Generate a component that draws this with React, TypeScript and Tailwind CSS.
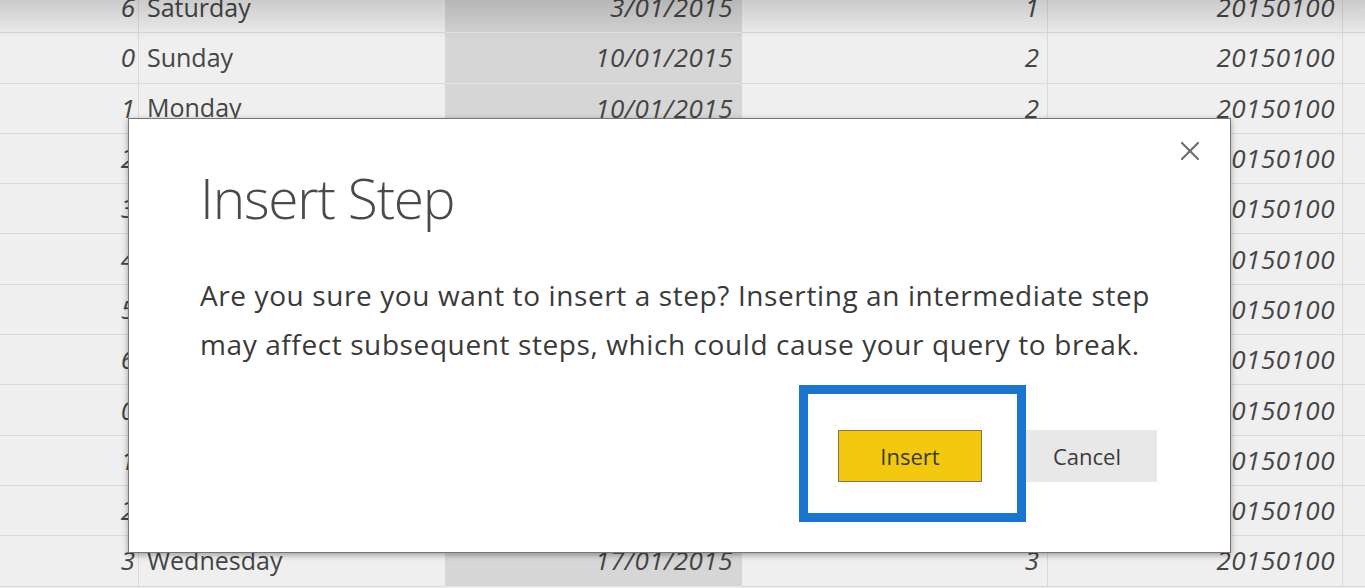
import { X } from "lucide-react";

const rows = [
  { n: "6", day: "Saturday", date: "3/01/2015", week: "1", key: "20150100" },
  { n: "0", day: "Sunday", date: "10/01/2015", week: "2", key: "20150100" },
  { n: "1", day: "Monday", date: "10/01/2015", week: "2", key: "20150100" },
  { n: "2", day: "Tuesday", date: "10/01/2015", week: "2", key: "20150100" },
  { n: "3", day: "Wednesday", date: "10/01/2015", week: "2", key: "20150100" },
  { n: "4", day: "Thursday", date: "10/01/2015", week: "2", key: "20150100" },
  { n: "5", day: "Friday", date: "10/01/2015", week: "2", key: "20150100" },
  { n: "6", day: "Saturday", date: "10/01/2015", week: "2", key: "20150100" },
  { n: "0", day: "Sunday", date: "17/01/2015", week: "3", key: "20150100" },
  { n: "1", day: "Monday", date: "17/01/2015", week: "3", key: "20150100" },
  { n: "2", day: "Tuesday", date: "17/01/2015", week: "3", key: "20150100" },
  { n: "3", day: "Wednesday", date: "17/01/2015", week: "3", key: "20150100" },
];

const font = { fontFamily: '"Open Sans", "Noto Sans", sans-serif' };

export default function App() {
  return (
    <div
      className="relative w-[1365px] h-[588px] overflow-hidden bg-[#efefef] text-[#454545]"
      style={font}
    >
      {/* data grid behind the dialog */}
      <div className="-mt-[17px] flex flex-col">
        {rows.map((r, i) => (
          <div
            key={i}
            className="grid grid-cols-[139px_306px_297px_306px_295px_1fr] h-[50.3px] text-[25px]"
          >
            <div className="flex items-center justify-end pr-[3px] border-r border-b border-[#d9d9d9] italic text-[26px]">
              {r.n}
            </div>
            <div className="flex items-center pl-[8px] border-b border-[#d9d9d9]">
              {r.day}
            </div>
            <div className="flex items-center justify-end pr-[9px] bg-[#d6d6d6] border-b border-[#e6e6e6] italic text-[26px] tracking-[0.5px]">
              {r.date}
            </div>
            <div className="flex items-center justify-end pr-[8px] border-r border-b border-[#d9d9d9] italic text-[26px]">
              {r.week}
            </div>
            <div className="flex items-center justify-end pr-[7px] border-r border-b border-[#d9d9d9] italic text-[26px] tracking-[0.5px]">
              {r.key}
            </div>
            <div className="border-b border-[#d9d9d9]" />
          </div>
        ))}
      </div>

      {/* top vignette of the video frame */}
      <div className="pointer-events-none absolute inset-x-0 top-0 h-[40px] bg-gradient-to-b from-black/15 to-transparent" />

      {/* dialog */}
      <div className="absolute left-[128px] top-[118px] w-[1103px] h-[435px] bg-white border border-[#767676] shadow-[0_2px_6px_rgba(0,0,0,0.35)] flex flex-col pl-[71px] pr-[73px] pt-[51px]">
        <button className="absolute right-[24px] top-[16px] text-[#6e6e6e]">
          <X size={32} strokeWidth={1.6} />
        </button>
        <h1 className="text-[55px] leading-none font-light tracking-[-1.2px] text-[#4a4a4a]">
          Insert Step
        </h1>
        <p className="mt-[46px] text-[28px] leading-[49px] tracking-[0.6px] whitespace-nowrap text-[#3a3a3a]">
          Are you sure you want to insert a step? Inserting an intermediate step
          <br />
          may affect subsequent steps, which could cause your query to break.
        </p>
        <div className="mt-[61px] flex justify-end gap-[35px]">
          <button className="w-[144px] h-[52px] bg-[#f2c811] border border-[#857650] text-[22px] text-[#3a3a3a]">
            Insert
          </button>
          <button className="w-[140px] h-[52px] bg-[#e8e8e8] text-[22px] text-[#3a3a3a]">
            Cancel
          </button>
        </div>
      </div>

      {/* blue highlight annotation */}
      <div className="pointer-events-none absolute left-[799px] top-[385px] w-[227px] h-[137px] border-[9px] border-[#1b74cd]" />
    </div>
  );
}
